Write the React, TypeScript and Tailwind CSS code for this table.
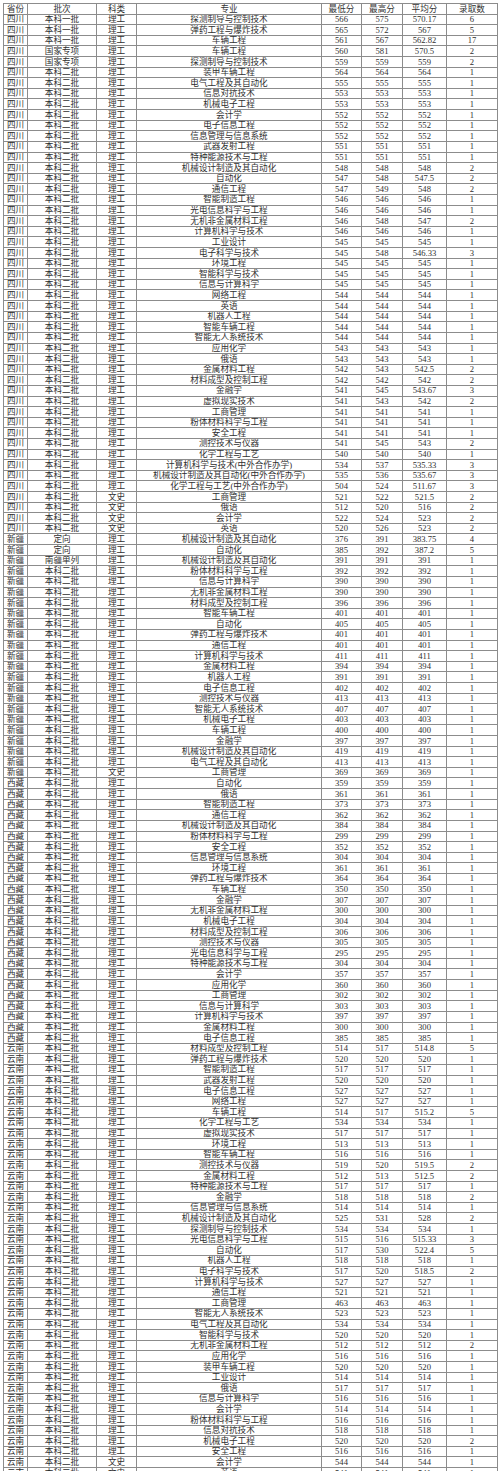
import React from "react";

const raw: string = `四川|本科一批|理工|探测制导与控制技术|566|575|570.17|6
四川|本科一批|理工|弹药工程与爆炸技术|565|572|567|5
四川|本科一批|理工|车辆工程|561|567|562.82|17
四川|国家专项|理工|车辆工程|560|581|570.5|2
四川|国家专项|理工|探测制导与控制技术|559|559|559|2
四川|本科二批|理工|装甲车辆工程|564|564|564|1
四川|本科二批|理工|电气工程及其自动化|555|555|555|1
四川|本科二批|理工|信息对抗技术|553|553|553|1
四川|本科二批|理工|机械电子工程|553|553|553|1
四川|本科二批|理工|会计学|552|552|552|1
四川|本科二批|理工|电子信息工程|552|552|552|1
四川|本科二批|理工|信息管理与信息系统|552|552|552|1
四川|本科二批|理工|武器发射工程|551|551|551|1
四川|本科二批|理工|特种能源技术与工程|551|551|551|1
四川|本科二批|理工|机械设计制造及其自动化|548|548|548|2
四川|本科二批|理工|自动化|547|548|547.5|2
四川|本科二批|理工|通信工程|547|549|548|2
四川|本科二批|理工|智能制造工程|546|546|546|1
四川|本科二批|理工|光电信息科学与工程|546|546|546|1
四川|本科二批|理工|无机非金属材料工程|546|548|547|2
四川|本科二批|理工|计算机科学与技术|546|546|546|1
四川|本科二批|理工|工业设计|545|545|545|1
四川|本科二批|理工|电子科学与技术|545|548|546.33|3
四川|本科二批|理工|环境工程|545|545|545|1
四川|本科二批|理工|智能科学与技术|545|545|545|1
四川|本科二批|理工|信息与计算科学|545|545|545|1
四川|本科二批|理工|网络工程|544|544|544|1
四川|本科二批|理工|英语|544|544|544|1
四川|本科二批|理工|机器人工程|544|544|544|1
四川|本科二批|理工|智能车辆工程|544|544|544|1
四川|本科二批|理工|智能无人系统技术|544|544|544|1
四川|本科二批|理工|应用化学|543|543|543|1
四川|本科二批|理工|俄语|543|543|543|1
四川|本科二批|理工|金属材料工程|542|543|542.5|2
四川|本科二批|理工|材料成型及控制工程|542|542|542|2
四川|本科二批|理工|金融学|541|545|543.67|3
四川|本科二批|理工|虚拟现实技术|541|543|542|2
四川|本科二批|理工|工商管理|541|541|541|1
四川|本科二批|理工|粉体材料科学与工程|541|541|541|1
四川|本科二批|理工|安全工程|541|541|541|1
四川|本科二批|理工|测控技术与仪器|541|545|543|2
四川|本科二批|理工|化学工程与工艺|540|540|540|1
四川|本科二批|理工|计算机科学与技术(中外合作办学)|534|537|535.33|3
四川|本科二批|理工|机械设计制造及其自动化(中外合作办学)|535|536|535.67|3
四川|本科二批|理工|化学工程与工艺(中外合作办学)|504|524|511.67|3
四川|本科二批|文史|工商管理|521|522|521.5|2
四川|本科二批|文史|俄语|512|520|516|2
四川|本科二批|文史|会计学|522|524|523|2
四川|本科二批|文史|英语|520|526|523|2
新疆|定向|理工|机械设计制造及其自动化|376|391|383.75|4
新疆|定向|理工|自动化|385|392|387.2|5
新疆|南疆单列|理工|机械设计制造及其自动化|391|391|391|1
新疆|本科二批|理工|粉体材料科学与工程|392|392|392|1
新疆|本科二批|理工|信息与计算科学|390|390|390|1
新疆|本科二批|理工|无机非金属材料工程|390|390|390|1
新疆|本科二批|理工|材料成型及控制工程|396|396|396|1
新疆|本科二批|理工|智能车辆工程|401|401|401|1
新疆|本科二批|理工|自动化|405|405|405|1
新疆|本科二批|理工|弹药工程与爆炸技术|401|401|401|1
新疆|本科二批|理工|通信工程|401|401|401|1
新疆|本科二批|理工|计算机科学与技术|411|411|411|1
新疆|本科二批|理工|金属材料工程|394|394|394|1
新疆|本科二批|理工|机器人工程|391|391|391|1
新疆|本科二批|理工|电子信息工程|402|402|402|1
新疆|本科二批|理工|测控技术与仪器|413|413|413|1
新疆|本科二批|理工|智能无人系统技术|407|407|407|1
新疆|本科二批|理工|机械电子工程|403|403|403|1
新疆|本科二批|理工|车辆工程|400|400|400|1
新疆|本科二批|理工|金融学|397|397|397|1
新疆|本科二批|理工|机械设计制造及其自动化|419|419|419|1
新疆|本科二批|理工|电气工程及其自动化|413|413|413|1
新疆|本科二批|文史|工商管理|369|369|369|1
西藏|本科二批|理工|自动化|359|359|359|1
西藏|本科二批|理工|俄语|361|361|361|1
西藏|本科二批|理工|智能制造工程|373|373|373|1
西藏|本科二批|理工|通信工程|362|362|362|1
西藏|本科二批|理工|机械设计制造及其自动化|384|384|384|1
西藏|本科二批|理工|粉体材料科学与工程|299|299|299|1
西藏|本科二批|理工|安全工程|352|352|352|1
西藏|本科二批|理工|信息管理与信息系统|304|304|304|1
西藏|本科二批|理工|环境工程|361|361|361|1
西藏|本科二批|理工|弹药工程与爆炸技术|364|364|364|1
西藏|本科二批|理工|车辆工程|350|350|350|1
西藏|本科二批|理工|金融学|307|307|307|1
西藏|本科二批|理工|无机非金属材料工程|300|300|300|1
西藏|本科二批|理工|机械电子工程|304|304|304|1
西藏|本科二批|理工|材料成型及控制工程|306|306|306|1
西藏|本科二批|理工|测控技术与仪器|305|305|305|1
西藏|本科二批|理工|光电信息科学与工程|295|295|295|1
西藏|本科二批|理工|特种能源技术与工程|304|304|304|1
西藏|本科二批|理工|会计学|357|357|357|1
西藏|本科二批|理工|应用化学|360|360|360|1
西藏|本科二批|理工|工商管理|302|302|302|1
西藏|本科二批|理工|信息与计算科学|303|303|303|1
西藏|本科二批|理工|计算机科学与技术|397|397|397|1
西藏|本科二批|理工|金属材料工程|300|300|300|1
西藏|本科二批|理工|电子信息工程|385|385|385|1
云南|本科二批|理工|材料成型及控制工程|514|517|514.8|5
云南|本科二批|理工|弹药工程与爆炸技术|520|520|520|1
云南|本科二批|理工|智能制造工程|517|517|517|1
云南|本科二批|理工|武器发射工程|520|520|520|1
云南|本科二批|理工|电子信息工程|527|527|527|1
云南|本科二批|理工|网络工程|527|527|527|1
云南|本科二批|理工|车辆工程|514|517|515.2|5
云南|本科二批|理工|化学工程与工艺|534|534|534|1
云南|本科二批|理工|虚拟现实技术|517|517|517|1
云南|本科二批|理工|环境工程|513|513|513|1
云南|本科二批|理工|智能车辆工程|516|516|516|1
云南|本科二批|理工|测控技术与仪器|519|520|519.5|2
云南|本科二批|理工|金属材料工程|512|513|512.5|2
云南|本科二批|理工|特种能源技术与工程|517|517|517|1
云南|本科二批|理工|金融学|518|518|518|2
云南|本科二批|理工|信息管理与信息系统|514|514|514|1
云南|本科二批|理工|机械设计制造及其自动化|525|531|528|2
云南|本科二批|理工|探测制导与控制技术|534|534|534|1
云南|本科二批|理工|光电信息科学与工程|515|516|515.33|3
云南|本科二批|理工|自动化|517|530|522.4|5
云南|本科二批|理工|机器人工程|518|518|518|1
云南|本科二批|理工|电子科学与技术|517|520|518.5|2
云南|本科二批|理工|计算机科学与技术|527|527|527|1
云南|本科二批|理工|通信工程|521|521|521|1
云南|本科二批|理工|工商管理|463|463|463|1
云南|本科二批|理工|智能无人系统技术|523|523|523|1
云南|本科二批|理工|电气工程及其自动化|534|534|534|1
云南|本科二批|理工|智能科学与技术|520|520|520|1
云南|本科二批|理工|无机非金属材料工程|512|512|512|2
云南|本科二批|理工|应用化学|516|516|516|1
云南|本科二批|理工|装甲车辆工程|520|520|520|1
云南|本科二批|理工|工业设计|514|514|514|1
云南|本科二批|理工|俄语|517|517|517|1
云南|本科二批|理工|信息与计算科学|516|516|516|1
云南|本科二批|理工|会计学|514|514|514|1
云南|本科二批|理工|粉体材料科学与工程|516|516|516|1
云南|本科二批|理工|信息对抗技术|518|518|518|1
云南|本科二批|理工|机械电子工程|520|520|520|2
云南|本科二批|理工|安全工程|516|516|516|1
云南|本科二批|文史|会计学|544|544|544|1
云南|本科二批|文史|英语|541|541|541|1`;

const rows: string[][] = raw.split("\n").map((l) => l.split("|"));
const header = ["省份", "批次", "科类", "专业", "最低分", "最高分", "平均分", "录取数"];

function Row({ cells, head }: { cells: string[]; head?: boolean }) {
  return (
    <div className="grid grid-cols-[25px_69px_40px_185px_40px_41px_44px_51px] h-[10.61px] border-b border-[#8c8c8c]">
      {cells.map((c, i) => (
        <div
          key={i}
          className={
            "flex items-center justify-center overflow-hidden whitespace-nowrap leading-none border-r border-[#8c8c8c] " +
            (i === 0 ? "border-l " : "") +
            (head ? "text-[#333]" : "text-[#2f2f2f]")
          }
        >
          {c}
        </div>
      ))}
    </div>
  );
}

export default function App() {
  return (
    <div className="w-[500px] h-[1471px] overflow-hidden bg-white pt-[3px] pl-[3px]">
      <div
        className="w-[495px] border-t border-[#8c8c8c] text-[8.6px]"
        style={{ fontFamily: '"Liberation Serif", "Noto Sans CJK SC", serif' }}
      >
        <Row cells={header} head />
        {rows.map((r, i) => (
          <Row key={i} cells={r} />
        ))}
      </div>
    </div>
  );
}
